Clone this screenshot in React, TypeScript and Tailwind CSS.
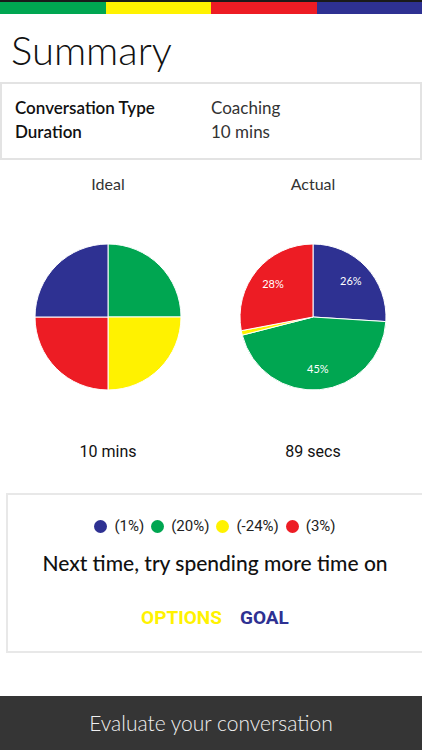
import React from "react";

const BLUE = "#2e3192";
const GREEN = "#00a651";
const YELLOW = "#fff200";
const RED = "#ed1c24";

type Slice = { v: number; c: string; label?: string };

function Pie({ slices }: { slices: Slice[] }) {
  const r = 73;
  const cx = 74;
  const cy = 74;
  let acc = 0;
  const pt = (a: number, rr: number) => {
    const rad = (a * Math.PI) / 180;
    return [cx + rr * Math.sin(rad), cy - rr * Math.cos(rad)];
  };
  return (
    <svg width="148" height="148" viewBox="0 0 148 148">
      {slices.map((s, i) => {
        const a0 = acc * 3.6;
        acc += s.v;
        const a1 = acc * 3.6;
        const [x0, y0] = pt(a0, r);
        const [x1, y1] = pt(a1, r);
        const large = a1 - a0 > 180 ? 1 : 0;
        const d = `M ${cx} ${cy} L ${x0} ${y0} A ${r} ${r} 0 ${large} 1 ${x1} ${y1} Z`;
        return <path key={i} d={d} fill={s.c} stroke="#ffffff" strokeWidth="1" />;
      })}
      {(() => {
        let a = 0;
        return slices.map((s, i) => {
          const mid = (a + s.v / 2) * 3.6;
          a += s.v;
          if (!s.label) return null;
          const [lx, ly] = pt(mid, 52);
          return (
            <text
              key={"l" + i}
              x={lx}
              y={ly + 4}
              textAnchor="middle"
              fill="#ffffff"
              fontSize="11"
              fontFamily="Lato, 'Open Sans', sans-serif"
            >
              {s.label}
            </text>
          );
        });
      })()}
    </svg>
  );
}

export default function App() {
  const raleway = { fontFamily: "Lato, 'Open Sans', sans-serif" };
  return (
    <div className="w-[422px] h-[750px] bg-white flex flex-col overflow-hidden relative" style={raleway}>
      <div className="flex h-[14px] border-t-2 border-[#1a1a1a]">
        <div className="flex-1 bg-[#00a651]" />
        <div className="flex-1 bg-[#fff200]" />
        <div className="flex-1 bg-[#ed1c24]" />
        <div className="flex-1 bg-[#2e3192]" />
      </div>
      <div className="pl-[11px] pt-[14px] h-[68px] text-[40px] font-light leading-[44px] text-[#111]">Summary</div>
      <div className="mx-0 h-[78px] border-2 border-[#e3e3e3] pl-[13px] pt-[12px] text-[17px] leading-[24px] text-[#111]">
        <div className="flex">
          <div className="w-[196px] font-semibold">Conversation Type</div>
          <div className="text-[#333]">Coaching</div>
        </div>
        <div className="flex">
          <div className="w-[196px] font-semibold">Duration</div>
          <div className="text-[#333]">10 mins</div>
        </div>
      </div>
      <div className="flex pt-[14px]">
        <div className="w-[216px] flex flex-col items-center">
          <div className="text-[16px] leading-[20px] text-[#333]">Ideal</div>
          <div className="mt-[49px]">
            <Pie
              slices={[
                { v: 25, c: GREEN },
                { v: 25, c: YELLOW },
                { v: 25, c: RED },
                { v: 25, c: BLUE },
              ]}
            />
          </div>
          <div className="mt-[51px] text-[16px] leading-[20px] text-[#111]" style={{ fontFamily: "Roboto, sans-serif" }}>
            10 mins
          </div>
        </div>
        <div className="w-[194px] flex flex-col items-center">
          <div className="text-[16px] leading-[20px] text-[#333]">Actual</div>
          <div className="mt-[49px]">
            <Pie
              slices={[
                { v: 26, c: BLUE, label: "26%" },
                { v: 45, c: GREEN, label: "45%" },
                { v: 1, c: YELLOW },
                { v: 28, c: RED, label: "28%" },
              ]}
            />
          </div>
          <div className="mt-[51px] text-[16px] leading-[20px] text-[#111]" style={{ fontFamily: "Roboto, sans-serif" }}>
            89 secs
          </div>
        </div>
      </div>
      <div className="ml-[6px] mt-[31px] h-[160px] border-2 border-r-0 border-[#e8e8e8] flex flex-col items-center pt-[20px]">
        <div className="flex items-center gap-[7px] text-[15px] text-[#222]" style={{ fontFamily: "Roboto, sans-serif" }}>
          <span className="w-[13px] h-[13px] rounded-full bg-[#2e3192]" />
          <span>(1%)</span>
          <span className="w-[13px] h-[13px] rounded-full bg-[#00a651]" />
          <span>(20%)</span>
          <span className="w-[13px] h-[13px] rounded-full bg-[#fff200]" />
          <span>(-24%)</span>
          <span className="w-[13px] h-[13px] rounded-full bg-[#ed1c24]" />
          <span>(3%)</span>
        </div>
        <div className="mt-[13px] text-[21px] leading-[24px] text-[#111] font-medium">Next time, try spending more time on</div>
        <div className="mt-[29px] flex gap-[18px] text-[19px] font-bold" style={{ fontFamily: "Roboto, sans-serif" }}>
          <span className="text-[#fff200]">OPTIONS</span>
          <span className="text-[#2e3192]">GOAL</span>
        </div>
      </div>
      <div className="absolute left-0 right-0 bottom-0 h-[54px] bg-[#353535] flex items-center justify-center text-[21px] text-[#f0f0f0] font-light">
        Evaluate your conversation
      </div>
    </div>
  );
}
